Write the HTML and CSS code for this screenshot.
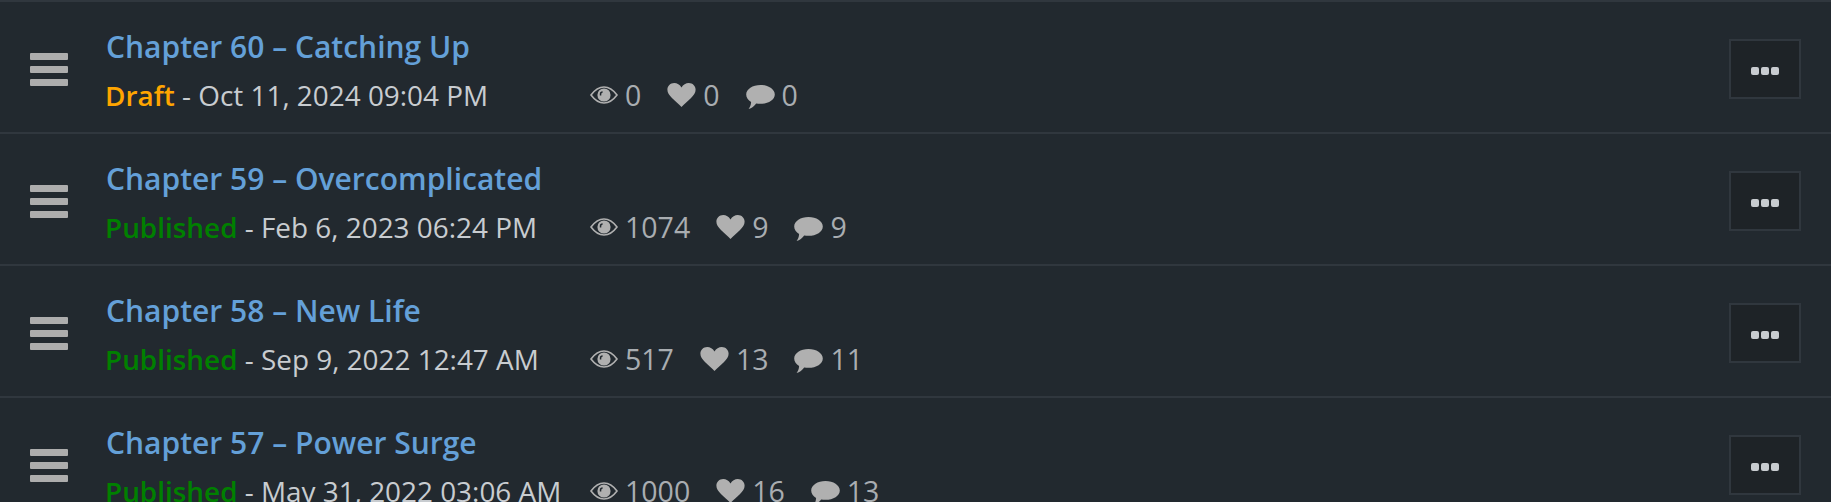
FILE: index.html
```html
<!DOCTYPE html>
<html lang="en">
<head>
    <meta charset="UTF-8">
    <meta name="viewport" content="width=device-width, initial-scale=1.0">
    <title>Chapters</title>
    <link rel="stylesheet" href="styles.css">
</head>
<body>
    <svg class="icon-defs" width="0" height="0">
        <symbol id="eye" viewBox="0 0 28 18">
            <path fill="none" stroke="currentColor" stroke-width="1.6" d="M1 9C5 3.600 9 1 14 1s9 2.600 13 8c-4 5.400-8 8-13 8S5 14.400 1 9z"/>
            <path fill="currentColor" fill-rule="evenodd" d="M14 2.400a6.600 6.600 0 1 0 0 13.200 6.600 6.600 0 0 0 0-13.200zM9.800 8a2.800 2.800 0 0 1 2.800-2.800v1.500a1.400 1.400 0 0 0-1.300 1.300v1.500H9.800z"/>
        </symbol>
        <symbol id="heart" viewBox="0 0 29 24">
            <path fill="currentColor" d="M14.500 24C12 21.200 9 18.800 5.200 15.200 2.200 12.400.4 10 .4 6.800.4 2.800 3.400 0 7.200 0c3 0 5.600 1.600 7.300 4.400C16.200 1.600 18.800 0 21.800 0c3.800 0 6.800 2.800 6.800 6.800 0 3.200-1.800 5.600-4.800 8.400-3.800 3.600-6.800 6-9.300 8.800z"/>
        </symbol>
        <symbol id="bubble" viewBox="0 0 29 24">
            <path fill="currentColor" d="M14.500 0C22.400 0 28.800 4.200 28.800 9.400s-6.400 9.400-14.300 9.400c-1.500 0-3-.2-4.300-.4C8.400 20.800 5.600 23.200 2.600 24c1.400-1.800 2.300-3.900 2.500-7C2.200 15.300.2 12.400.2 9.400.2 4.200 6.600 0 14.500 0z"/>
        </symbol>
    </svg>

    <div class="chapter-list">
        <div class="chapter-row">
            <div class="drag-handle"><span></span><span></span><span></span></div>
            <div class="chapter-info">
                <a class="chapter-title" href="#">Chapter 60 – Catching Up</a>
                <div class="chapter-meta">
                    <div class="chapter-date"><span class="state-draft">Draft</span> - Oct 11, 2024 09:04 PM</div>
                    <div class="chapter-stats">
                        <span class="stat"><svg class="icon-eye"><use href="#eye"/></svg>0</span>
                        <span class="stat"><svg class="icon-heart"><use href="#heart"/></svg>0</span>
                        <span class="stat"><svg class="icon-bubble"><use href="#bubble"/></svg>0</span>
                    </div>
                </div>
            </div>
            <button class="more-button"><span></span><span></span><span></span></button>
        </div>

        <div class="chapter-row">
            <div class="drag-handle"><span></span><span></span><span></span></div>
            <div class="chapter-info">
                <a class="chapter-title" href="#">Chapter 59 – Overcomplicated</a>
                <div class="chapter-meta">
                    <div class="chapter-date"><span class="state-published">Published</span> - Feb 6, 2023 06:24 PM</div>
                    <div class="chapter-stats">
                        <span class="stat"><svg class="icon-eye"><use href="#eye"/></svg>1074</span>
                        <span class="stat"><svg class="icon-heart"><use href="#heart"/></svg>9</span>
                        <span class="stat"><svg class="icon-bubble"><use href="#bubble"/></svg>9</span>
                    </div>
                </div>
            </div>
            <button class="more-button"><span></span><span></span><span></span></button>
        </div>

        <div class="chapter-row">
            <div class="drag-handle"><span></span><span></span><span></span></div>
            <div class="chapter-info">
                <a class="chapter-title" href="#">Chapter 58 – New Life</a>
                <div class="chapter-meta">
                    <div class="chapter-date"><span class="state-published">Published</span> - Sep 9, 2022 12:47 AM</div>
                    <div class="chapter-stats">
                        <span class="stat"><svg class="icon-eye"><use href="#eye"/></svg>517</span>
                        <span class="stat"><svg class="icon-heart"><use href="#heart"/></svg>13</span>
                        <span class="stat"><svg class="icon-bubble"><use href="#bubble"/></svg>11</span>
                    </div>
                </div>
            </div>
            <button class="more-button"><span></span><span></span><span></span></button>
        </div>

        <div class="chapter-row">
            <div class="drag-handle"><span></span><span></span><span></span></div>
            <div class="chapter-info">
                <a class="chapter-title" href="#">Chapter 57 – Power Surge</a>
                <div class="chapter-meta">
                    <div class="chapter-date"><span class="state-published">Published</span> - May 31, 2022 03:06 AM</div>
                    <div class="chapter-stats">
                        <span class="stat"><svg class="icon-eye"><use href="#eye"/></svg>1000</span>
                        <span class="stat"><svg class="icon-heart"><use href="#heart"/></svg>16</span>
                        <span class="stat"><svg class="icon-bubble"><use href="#bubble"/></svg>13</span>
                    </div>
                </div>
            </div>
            <button class="more-button"><span></span><span></span><span></span></button>
        </div>
    </div>
</body>
</html>
```

FILE: styles.css
```css
html, body {
    height: 100%;
    overflow: hidden;
}

body {
    margin: 0;
    font-family: "Open Sans", "Noto Sans", sans-serif;
    background: #22292f;
    color: #c8ccd0;
}

.icon-defs {
    display: block;
}

.chapter-list {
    border-top: 2px solid #30373e;
}

.chapter-row {
    display: flex;
    align-items: center;
    box-sizing: border-box;
    height: 132px;
    padding: 4px 30px 0 30px;
    border-bottom: 2px solid #30373e;
}

.drag-handle {
    display: flex;
    flex-direction: column;
    gap: 6px;
    width: 38px;
    margin-right: 38px;
}

.drag-handle span {
    height: 7px;
    border-radius: 1px;
    background: #adadad;
}

.chapter-info {
    flex: 1;
    min-width: 0;
    padding-top: 3px;
}

.chapter-title {
    display: block;
    font-size: 30px;
    font-weight: 600;
    line-height: 36px;
    color: #64a0d8;
    text-decoration: none;
}

.chapter-meta {
    display: flex;
    align-items: center;
    margin-top: 12px;
    font-size: 28px;
    line-height: 36px;
}

.chapter-date {
    width: 484px;
    margin-right: -1px;
    margin-left: -1px;
    font-size: 27.9px;
    white-space: nowrap;
}

.state-draft {
    font-weight: 600;
    color: #ffa500;
}

.state-published {
    font-weight: 600;
    color: #008000;
}

.chapter-stats {
    display: flex;
    gap: 26px;
    margin-left: 2px;
    font-size: 28.5px;
    color: #a9adb1;
}

.stat {
    display: flex;
    align-items: center;
    gap: 7px;
}

.stat svg {
    color: #b0b0b0;
}

.icon-eye {
    width: 28px;
    height: 18px;
}

.icon-heart {
    width: 29px;
    height: 24px;
}

.icon-bubble {
    width: 29px;
    height: 24px;
    margin-top: 4px;
}

.more-button {
    display: flex;
    align-items: center;
    justify-content: center;
    gap: 2px;
    box-sizing: border-box;
    width: 72px;
    height: 60px;
    padding: 4px 0 0;
    border: 2px solid #30373e;
    background: #1e2327;
}

.more-button span {
    width: 8px;
    height: 8px;
    border-radius: 2px;
    background: #c8ccd0;
}
```
